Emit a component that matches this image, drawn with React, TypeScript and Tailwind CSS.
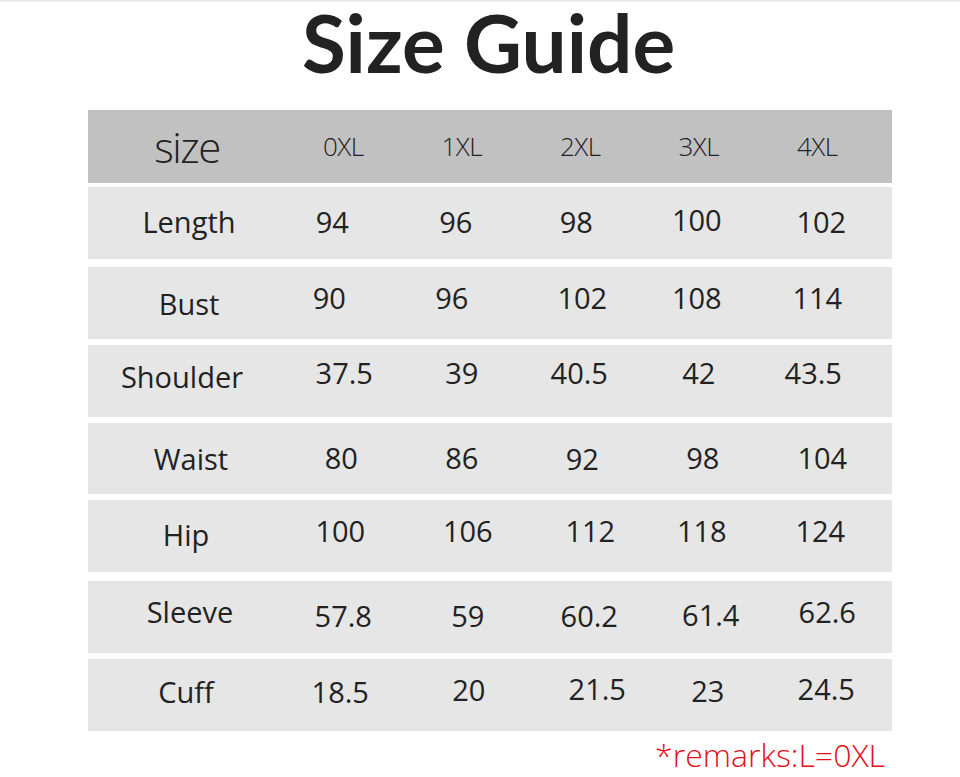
import React from "react";

type Cell = [string, string];

const header: Cell[] = [
  ["size", "translate-x-[1px] translate-y-[1px]"],
  ["0XL", "translate-y-[1px]"],
  ["1XL", "translate-y-[1px]"],
  ["2XL", "translate-y-[1px]"],
  ["3XL", "translate-y-[1px]"],
  ["4XL", "translate-y-[1px]"],
];

const rows: { cls: string; cells: Cell[] }[] = [
  {
    cls: "mt-[4px] h-[72px]",
    cells: [
      ["Length", "translate-x-[3px]"],
      ["94", "translate-x-[-11px]"],
      ["96", "translate-x-[-6px]"],
      ["98", "translate-x-[-4px]"],
      ["100", "translate-x-[-2px] translate-y-[-2px]"],
      ["102", "translate-x-[4px]"],
    ],
  },
  {
    cls: "mt-[8px] h-[72px]",
    cells: [
      ["Bust", "translate-x-[3px] translate-y-[2px]"],
      ["90", "translate-x-[-14px] translate-y-[-4px]"],
      ["96", "translate-x-[-10px] translate-y-[-4px]"],
      ["102", "translate-x-[2px] translate-y-[-4px]"],
      ["108", "translate-x-[-2px] translate-y-[-4px]"],
      ["114", "translate-y-[-4px]"],
    ],
  },
  {
    cls: "mt-[6px] h-[72px]",
    cells: [
      ["Shoulder", "translate-x-[-4px] translate-y-[-3px]"],
      ["37.5", "translate-x-[1px] translate-y-[-7px]"],
      ["39", "translate-y-[-7px]"],
      ["40.5", "translate-x-[-1px] translate-y-[-7px]"],
      ["42", "translate-y-[-7px]"],
      ["43.5", "translate-x-[-4px] translate-y-[-7px]"],
    ],
  },
  {
    cls: "mt-[6px] h-[71px]",
    cells: [
      ["Waist", "translate-x-[5px] translate-y-[1px]"],
      ["80", "translate-x-[-2px]"],
      ["86", ""],
      ["92", "translate-x-[2px] translate-y-[1px]"],
      ["98", "translate-x-[4px]"],
      ["104", "translate-x-[5px]"],
    ],
  },
  {
    cls: "mt-[6px] h-[72px]",
    cells: [
      ["Hip", ""],
      ["100", "translate-x-[-3px] translate-y-[-4px]"],
      ["106", "translate-x-[6px] translate-y-[-4px]"],
      ["112", "translate-x-[10px] translate-y-[-4px]"],
      ["118", "translate-x-[3px] translate-y-[-4px]"],
      ["124", "translate-x-[3px] translate-y-[-4px]"],
    ],
  },
  {
    cls: "mt-[9px] h-[72px]",
    cells: [
      ["Sleeve", "translate-x-[4px] translate-y-[-4px]"],
      ["57.8", ""],
      ["59", "translate-x-[6px]"],
      ["60.2", "translate-x-[9px]"],
      ["61.4", "translate-x-[12px] translate-y-[-1px]"],
      ["62.6", "translate-x-[10px] translate-y-[-4px]"],
    ],
  },
  {
    cls: "mt-[6px] h-[72px]",
    cells: [
      ["Cuff", "translate-y-[-2px]"],
      ["18.5", "translate-x-[-3px] translate-y-[-2px]"],
      ["20", "translate-x-[7px] translate-y-[-4px]"],
      ["21.5", "translate-x-[17px] translate-y-[-5px]"],
      ["23", "translate-x-[9px] translate-y-[-3px]"],
      ["24.5", "translate-x-[9px] translate-y-[-5px]"],
    ],
  },
];

export default function App() {
  return (
    <div className="w-[960px] h-[777px] bg-white overflow-hidden text-[#222]">
      <div className="h-[2px] bg-[#ebebeb]" />
      <div className="h-[108px] pl-[17px] flex justify-center items-start font-['Lato',sans-serif] font-bold text-[80px] leading-[80px] text-[#222]">
        <h1>Size Guide</h1>
      </div>
      <div className="mx-[88px] w-[804px] font-['Open_Sans','Noto_Sans',sans-serif]">
        <div className="grid grid-cols-[196px_repeat(5,118.5px)_1fr] items-center h-[73px] bg-[#c1c1c1] font-light">
          {header.map(([t, c], i) => (
            <div key={i} className="text-center">
              <span
                className={
                  (i === 0
                    ? "inline-block text-[42px] leading-none tracking-[-1.5px] "
                    : "inline-block text-[26px] leading-none tracking-[-0.5px] ") + c
                }
              >
                {t}
              </span>
            </div>
          ))}
          <div />
        </div>
        {rows.map((r, ri) => (
          <div
            key={ri}
            className={
              "grid grid-cols-[196px_repeat(5,118.5px)_1fr] items-center bg-[#e6e6e6] " + r.cls
            }
          >
            {r.cells.map(([t, c], i) => (
              <div key={i} className="text-center">
                <span className={"inline-block text-[29px] leading-none " + c}>{t}</span>
              </div>
            ))}
            <div />
          </div>
        ))}
        <div className="mt-[8px] pr-[7px] text-right font-light text-[32px] leading-none text-[#e3101c]">
          *remarks:L=0XL
        </div>
      </div>
    </div>
  );
}
